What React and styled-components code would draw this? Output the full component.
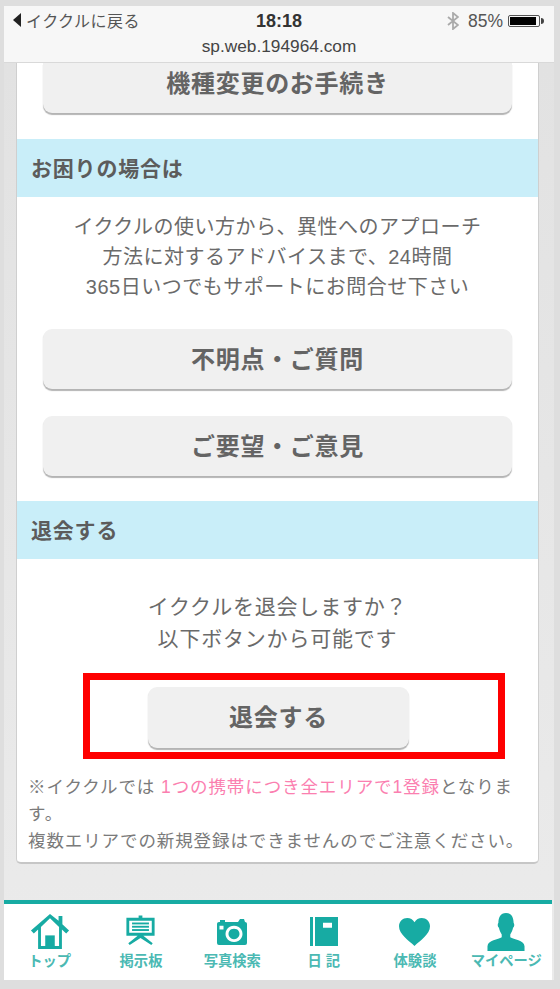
import React from "react";
import styled, { createGlobalStyle } from "styled-components";

const Global = createGlobalStyle`
  html, body { margin: 0; padding: 0; background: #dedede; }
  body { font-family: "Liberation Sans", "Noto Sans CJK JP", sans-serif; }
`;
const Frame = styled.div`
  width: 560px; height: 989px; box-sizing: border-box; padding: 6px 6px 9px 4px;
  display: flex; flex-direction: column; overflow: hidden; background: #dedede;
`;
const StatusBar = styled.header`
  height: 57px; flex: none; box-sizing: border-box; background: #f7f7f7;
  border-bottom: 1px solid #d9d9d9; color: #222; position: relative; z-index: 1;
`;
const StatusRow = styled.div`
  display: grid; grid-template-columns: 1fr auto 1fr; align-items: center; height: 30px; padding: 0 9px;
`;
const Back = styled.div`
  display: flex; align-items: center; gap: 5px; font-size: 16px; letter-spacing: 0.5px; color: #555; margin-top: -2px;
`;
const Tri = styled.span`
  width: 0; height: 0; border-style: solid; border-width: 7px 8px 7px 0; border-color: transparent #222 transparent transparent;
`;
const Time = styled.div`font-size: 18px; font-weight: 700; color: #333;`;
const Right = styled.div`
  display: flex; justify-content: flex-end; align-items: center; font-size: 17.5px; color: #555;
`;
const Percent = styled.span`margin: 0 5px 0 9px;`;
const Battery = styled.div`
  width: 32px; height: 12px; border: 1px solid #555; padding: 1px 3px 1px 1px; box-sizing: border-box; border-radius: 2px; position: relative; margin-right: 5px;
  &::before { content: ""; display: block; height: 100%; background: #000; }
  &::after { content: ""; position: absolute; right: -5px; top: 2px; width: 3px; height: 6px; background: #444; border-radius: 0 3px 3px 0; }
`;
const Url = styled.div`
  text-align: center; font-size: 17.3px; color: #444; line-height: 20px;
`;
const Page = styled.div`
  flex: 1; min-height: 0; background: linear-gradient(#e2e2e2, #ebebeb); padding: 0 15px 0 12px; display: flex; flex-direction: column;
`;
const Card = styled.main`
  height: 801px; flex: none; box-sizing: border-box; background: #fff; border: 1px solid #cfcfcf; border-top: 0;
  border-bottom: 2px solid #c6c6c6; border-radius: 0 0 5px 5px; display: flex; flex-direction: column;
`;
const TopButtonWrap = styled.div`padding: 0 26px; height: 76px; flex: none;`;
const Btn = styled.div`
  height: ${p => p.$h || 60}px; box-sizing: border-box; width: ${p => p.$w ? p.$w + "px" : "100%"};
  background: #f0f0f0; border-radius: ${p => p.$flat ? "0 0 9px 9px" : "9px"};
  box-shadow: 0 2px 1px #b4b4b4; padding-bottom: ${p => p.$pb ?? 3}px;
  display: flex; align-items: center; justify-content: center;
  font-size: 24px; letter-spacing: 0.7px; font-weight: 700; color: #646464;
`;
const SectionHead = styled.h2`
  margin: 0; height: 58px; flex: none; box-sizing: border-box; background: #c9eef9; display: flex; align-items: center;
  padding: 0 0 2px 14px; font-size: 21px; letter-spacing: 0.8px; font-weight: 700; color: #5c5c5c;
`;
const Lead = styled.p`
  margin: ${p => p.$mt}px 0 0; text-align: center; font-size: ${p => p.$fs}px; letter-spacing: ${p => p.$ls}px; line-height: ${p => p.$lh}px; color: #6a6a6a;
`;
const BtnStack = styled.div`
  padding: 0 26px; margin-top: ${p => p.$mt}px; margin-bottom: ${p => p.$mb}px; display: flex; flex-direction: column; gap: 27px;
`;
const RedFrame = styled.div`
  width: 422px; height: 86px; box-sizing: border-box; border: 7px solid #fe0000; margin: 18px 0 0 66px;
  padding: 7px 0 0 58px; flex: none;
`;
const Note = styled.p`
  margin: 15px 0 0; padding: 0 11px; font-size: 17.5px; letter-spacing: 0.9px; line-height: 27px; color: #7a7a7a;
`;
const Pink = styled.span`color: #fb7fb0;`;
const Nav = styled.nav`
  margin-top: 36px; height: 80px; flex: none; box-sizing: border-box; background: #fff; border-top: 4px solid #17aba3;
  margin-left: -12px; margin-right: -13px; display: grid; grid-template-columns: repeat(6, 1fr);
`;
const NavItem = styled.div`
  display: flex; flex-direction: column; align-items: center; justify-content: flex-end; padding-bottom: 11px;
  color: #4bb9b3; font-size: 14.3px; line-height: 16px; font-weight: 700; white-space: nowrap;
`;
const Icon = styled.svg`display: block; fill: #17aba3; margin-bottom: ${p => p.$mb}px;`;

const Home = () => (
  <Icon $mb={3} width="40" height="37" viewBox="0 0 42 38" preserveAspectRatio="none">
    <path d="M21 1 L30 8 V3 H34 V11.500 L41 18 L38 21 L33.500 17 V37 H8.500 V17 L4 21 L1 18 Z M21 5.500 L11.500 14.500 V34 H30.500 V14.500 Z" fillRule="evenodd" />
    <rect x="16" y="23" width="10" height="12" />
  </Icon>
);
const Board = () => (
  <Icon $mb={7} width="31" height="31" viewBox="0 0 32 33">
    <path d="M1 3 H14 V0.500 H18 V3 H31 V22 H19 L29 30 L27.500 32 L16 24.500 L4.500 32 L3 30 L13 22 H1 Z M4 6 V19 H28 V6 Z" fillRule="evenodd" />
    <rect x="7" y="8" width="18" height="2" /><rect x="7" y="11.500" width="18" height="2" /><rect x="7" y="15" width="18" height="2" />
  </Icon>
);
const Camera = () => (
  <Icon $mb={8} width="32" height="26" viewBox="0 0 32 27" preserveAspectRatio="none">
    <path d="M1 5 Q1 3 3 3 H4 V1 H9 V3 H22 L24 0 H28 L29 3 Q31 3 31 5 V25 Q31 27 29 27 H3 Q1 27 1 25 Z M18 7 A8.500 8.500 0 1 0 18.010 7 Z M18 10 A5.500 5.500 0 1 1 17.990 10 Z M3.500 7 V11 H7.500 V7 Z" fillRule="evenodd" />
    <circle cx="18" cy="15.500" r="3.800" />
  </Icon>
);
const Diary = () => (
  <Icon $mb={7} width="28" height="29" viewBox="0 0 28 30" preserveAspectRatio="none">
    <path d="M0 0 H3 V30 H0 Z M5 0 H28 V30 H5 Z M13 6 V11 H22 V6 Z" fillRule="evenodd" />
  </Icon>
);
const Heart = () => (
  <Icon $mb={7} width="31" height="28" viewBox="0 0 32 29" preserveAspectRatio="none">
    <path d="M16 29 C10 23 0 17 0 8.500 C0 3.500 4 0 8.500 0 C11.500 0 14.500 1.500 16 4.500 C17.500 1.500 20.500 0 23.500 0 C28 0 32 3.500 32 8.500 C32 17 22 23 16 29 Z" />
  </Icon>
);
const Person = () => (
  <Icon $mb={2} width="38" height="38" viewBox="0 0 40 39" preserveAspectRatio="none">
    <path d="M20 0 C26 0 28 5 28 10 C29 11 29 14 27.500 15 C27 18 25.500 20.500 24.500 22 V25 C28 27.500 39 28 39.500 34 V39 H0.500 V34 C1 28 12 27.500 15.500 25 V22 C14.500 20.500 13 18 12.500 15 C11 14 11 11 12 10 C12 5 14 0 20 0 Z" />
  </Icon>
);

const items = [
  [Home, "トップ"], [Board, "掲示板"], [Camera, "写真検索"],
  [Diary, "日 記"], [Heart, "体験談"], [Person, "マイページ"],
];

export default function App() {
  return (
    <Frame>
      <Global />
      <StatusBar>
        <StatusRow>
          <Back><Tri />イククルに戻る</Back>
          <Time>18:18</Time>
          <Right>
            <svg width="12" height="18" viewBox="0 0 12 18" fill="none" stroke="#aaa" strokeWidth="1.800"><path d="M1 5 L11 13 L6 17 V1 L11 5 L1 13" /></svg>
            <Percent>85%</Percent><Battery />
          </Right>
        </StatusRow>
        <Url>sp.web.194964.com</Url>
      </StatusBar>
      <Page>
        <Card>
          <TopButtonWrap><Btn $h={50} $pb={14} $flat>機種変更のお手続き</Btn></TopButtonWrap>
          <SectionHead>お困りの場合は</SectionHead>
          <Lead $mt={15} $lh={30} $fs={20} $ls={0.5}>イククルの使い方から、異性へのアプローチ<br />方法に対するアドバイスまで、24時間<br />365日いつでもサポートにお問合せ下さい</Lead>
          <BtnStack $mt={27} $mb={25}>
            <Btn>不明点・ご質問</Btn>
            <Btn>ご要望・ご意見</Btn>
          </BtnStack>
          <SectionHead>退会する</SectionHead>
          <Lead $mt={32} $lh={32} $fs={21} $ls={0.8}>イククルを退会しますか？<br />以下ボタンから可能です</Lead>
          <RedFrame><Btn $w={261} $h={61} $pb={5}>退会する</Btn></RedFrame>
          <Note>※イククルでは <Pink>1つの携帯につき全エリアで1登録</Pink>となります。<br />複数エリアでの新規登録はできませんのでご注意ください。</Note>
        </Card>
        <Nav>
          {items.map(([I, label]) => (
            <NavItem key={label}><I />{label}</NavItem>
          ))}
        </Nav>
      </Page>
    </Frame>
  );
}
